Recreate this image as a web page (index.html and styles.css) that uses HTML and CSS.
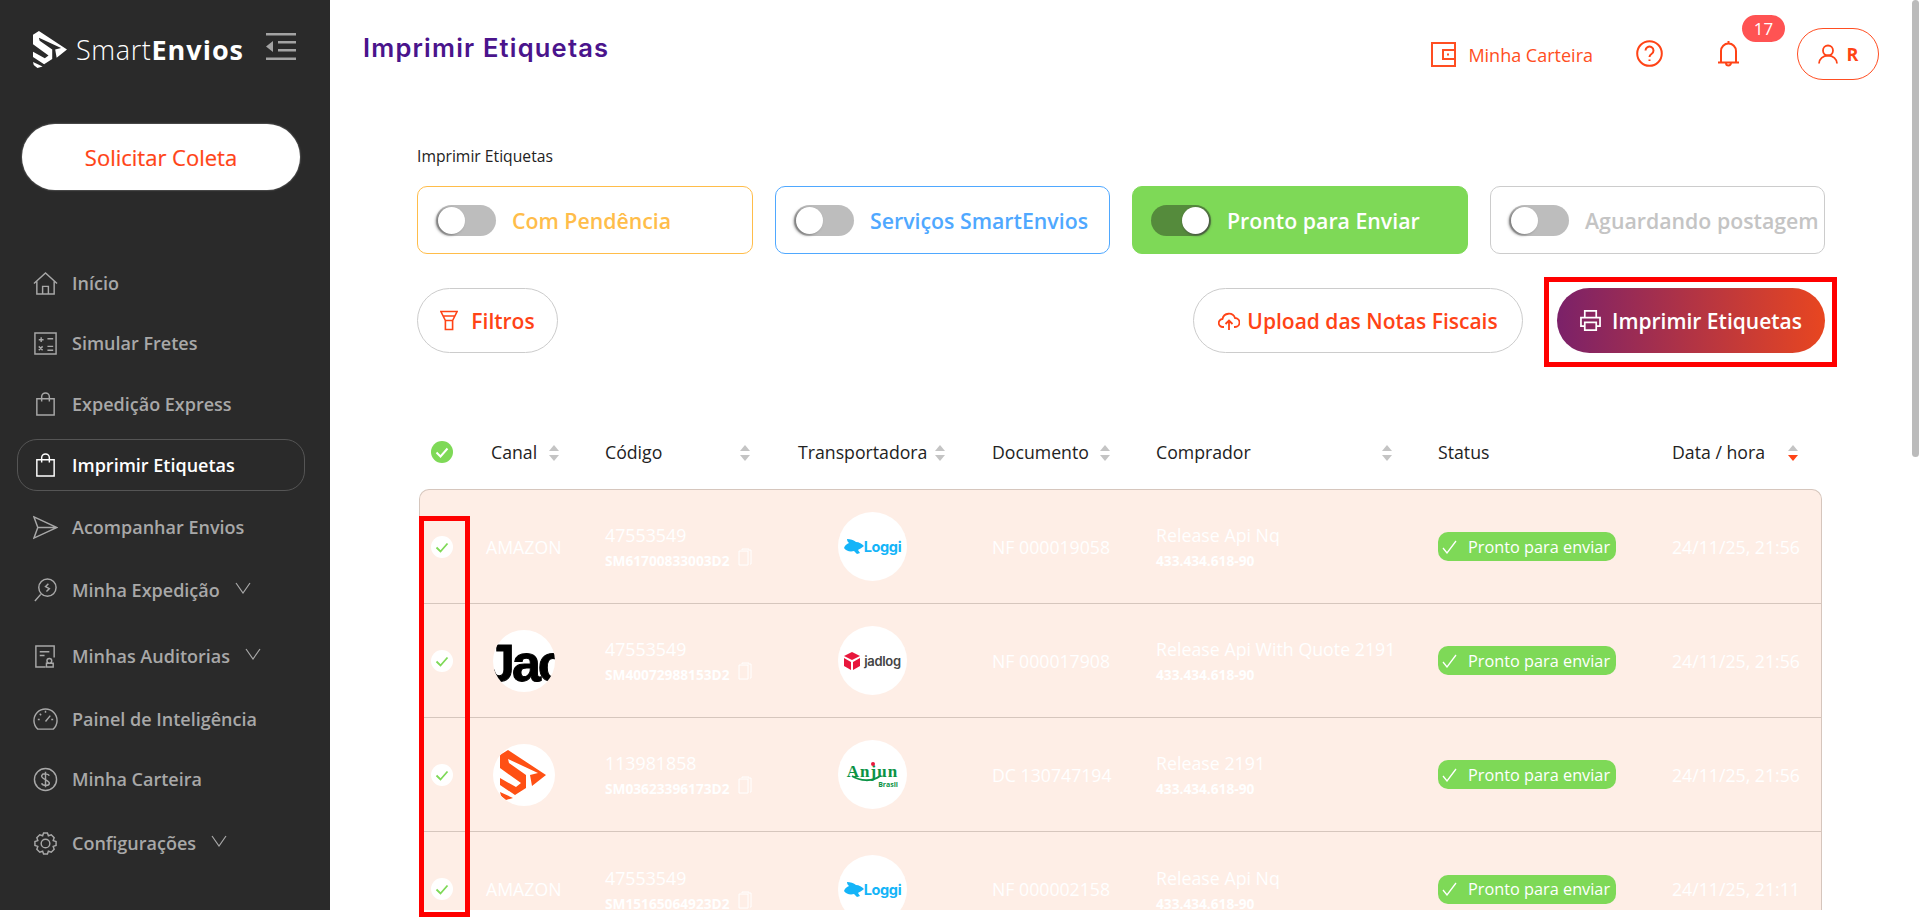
FILE: index.html
```html
<!DOCTYPE html>
<html lang="pt-BR">
<head>
<meta charset="utf-8">
<title>Imprimir Etiquetas</title>
<link rel="stylesheet" href="styles.css">
</head>
<body>
<div class="app">
  <aside class="sidebar">
    <div class="brand">
      <svg class="brand-mark" viewBox="7 6 46 50"><path fill="#fff" d="M15 6l38 25-14 11-2-11 8-2-30-14 1 4 17 12v13l-11 7-15-10v-7l16 9 5-4-21-15V11zM7 48l13 6-7 2-5-4z"/></svg>
      <span class="brand-name">Smart<b>Envios</b></span>
      <svg class="brand-toggle" viewBox="0 0 30 27"><path fill="#a3a3a3" d="M0 0h30v2.500H0zM12 8h18v2.500H12zM12 16h18v2.500H12zM0 24.500h30V27H0zM0 13.500L7 8v11z"/></svg>
    </div>
    <button class="collect">Solicitar Coleta</button>
    <nav class="nav">
      <a class="nav-item n1"><svg viewBox="0 0 26 26"><path d="M1 13L13 2l12 11M4 11v13h18V11M10 24v-8h6v8"/></svg>Início</a>
      <a class="nav-item n2"><svg viewBox="0 0 26 26"><path d="M2 2h22v22H2zM6 9h5M8.500 6.500v5M15 8h6M6 16l4 4M10 16l-4 4M15 16h6M15 20h6"/></svg>Simular Fretes</a>
      <a class="nav-item n3"><svg viewBox="0 0 26 26"><path d="M4 7h18v17H4zM9 10V5a4 4 0 0 1 8 0v5"/></svg>Expedição Express</a>
      <a class="nav-item active n4"><svg viewBox="0 0 26 26"><path d="M4 7h18v17H4zM9 10V5a4 4 0 0 1 8 0v5"/></svg>Imprimir Etiquetas</a>
      <a class="nav-item n5"><svg viewBox="0 0 26 26"><path d="M1 2l24 11L1 24l4-11zM5 13h20"/></svg>Acompanhar Envios</a>
      <a class="nav-item n6"><svg viewBox="0 0 26 26"><circle cx="15" cy="10" r="9"/><path d="M8 17l-6 7M16 6l-3 3 4 2-3 3"/></svg>Minha Expedição<svg class="chev" viewBox="0 0 16 12"><path d="M1 1l7 10 7-10"/></svg></a>
      <a class="nav-item n7"><svg viewBox="0 0 26 26"><path d="M22 14V2H3v22h10M7 8h10M7 12h5M17 15a2.500 2.500 0 1 1 0 5 2.500 2.500 0 0 1 0-5zM14 20h7v4h-7z"/></svg>Minhas Auditorias<svg class="chev" viewBox="0 0 16 12"><path d="M1 1l7 10 7-10"/></svg></a>
      <a class="nav-item n8"><svg viewBox="0 0 26 26"><path d="M5 23a12 12 0 1 1 16 0zM13 15l5-6M13 4v2M5 13h2M19 13h2M7 7l1.500 1.500"/></svg>Painel de Inteligência</a>
      <a class="nav-item n9"><svg viewBox="0 0 26 26"><circle cx="13" cy="13" r="11.500"/><path d="M17 9c-1-2-7-3-8 0s8 5 8 8-7 3-8 0M13 5v16"/></svg>Minha Carteira</a>
      <a class="nav-item n10"><svg viewBox="0 0 26 26"><circle cx="13" cy="13" r="4.500"/><path d="M11 2h4l1 3 3-1 3 3-1 3 3 1v4l-3 1 1 3-3 3-3-1-1 3h-4l-1-3-3 1-3-3 1-3-3-1v-4l3-1-1-3 3-3 3 1z"/></svg>Configurações<svg class="chev" viewBox="0 0 16 12"><path d="M1 1l7 10 7-10"/></svg></a>
    </nav>
  </aside>

  <main class="main">
    <header class="topbar">
      <h1 class="title">Imprimir Etiquetas</h1>
      <div class="top-actions">
        <a class="wallet"><svg viewBox="0 0 25 25"><path d="M1 1h23v23H1zM24 8H12v9h12M16 12.500h2"/></svg>Minha Carteira</a>
        <svg class="help" viewBox="0 0 27 27"><circle cx="13.500" cy="13.500" r="12.300"/><path d="M9.500 10.500a4 4 0 1 1 6 3.500c-1.500 1-2 1.500-2 3M13.500 19.500v1.500"/></svg>
        <div class="bell">
          <svg viewBox="0 0 21 27"><path d="M0 22.500h21M3 22.500V11a7.500 7.500 0 0 1 15 0v11.500M10.500 3.500V1M8 23a2.500 2.500 0 0 0 5 0"/></svg>
          <span class="badge">17</span>
        </div>
        <a class="user"><svg viewBox="0 0 20 20"><circle cx="10" cy="6" r="5"/><path d="M1 19a9 8 0 0 1 18 0"/></svg>R</a>
      </div>
    </header>

    <section class="filters">
      <p class="label">Imprimir Etiquetas</p>
      <div class="cards">
        <div class="card pending"><span class="switch"></span>Com Pendência</div>
        <div class="card services"><span class="switch"></span>Serviços SmartEnvios</div>
        <div class="card ready"><span class="switch on"></span>Pronto para Enviar</div>
        <div class="card waiting"><span class="switch"></span>Aguardando postagem</div>
      </div>
      <div class="actions">
        <button class="btn filter"><svg viewBox="0 0 20 22"><path d="M1 1h18l-5 10H6zM3.500 6h13M6 11h8v10H6z"/></svg>Filtros</button>
        <button class="btn upload"><svg viewBox="0 0 22 20"><path d="M6 16H5a4 4 0 0 1-.500-8A6.500 6.500 0 0 1 17 7a4.500 4.500 0 0 1 0 9h-1M11 19v-9M7.500 13L11 9.500l3.500 3.500"/></svg>Upload das Notas Fiscais</button>
        <button class="btn print"><svg viewBox="0 0 22 22"><path d="M5 8V1h12v7M5 17H1V8h20v9h-4M5 13h12v8H5z"/></svg>Imprimir Etiquetas</button>
      </div>
    </section>

    <section class="grid">
      <div class="row head">
        <div class="c-check"><span class="tick all"><svg viewBox="0 0 22 22"><path d="M5.500 11.500l4 4 7-8"/></svg></span></div>
        <div class="c-canal">Canal<i class="sort"></i></div>
        <div class="c-code">Código<i class="sort"></i></div>
        <div class="c-carrier">Transportadora<i class="sort"></i></div>
        <div class="c-doc">Documento<i class="sort"></i></div>
        <div class="c-buyer">Comprador<i class="sort"></i></div>
        <div class="c-status">Status</div>
        <div class="c-date">Data / hora<i class="sort desc"></i></div>
      </div>
      <div class="rows">
        <div class="row">
          <div class="c-check"><span class="tick"><svg viewBox="0 0 22 22"><path d="M5.500 11.500l4 4 7-8"/></svg></span></div>
          <div class="c-canal">AMAZON</div>
          <div class="c-code stacked"><div class="main-line">47553549</div><div class="sub-line">SM61700833003D2<svg class="copy" viewBox="0 0 14 18"><path d="M11 3V1H4v1M10 3H1v14h9zM12 2h1v14h-1"/></svg></div></div>
          <div class="c-carrier"><span class="logo-big"><svg class="rabbit" viewBox="0 0 20 17"><path d="M3 1c3 0 7 1 9 3 3 0 6 2 8 4-2 2-5 3-6 4l2 3-3 1-3-3c-4 1-8 0-10-3 1-3 3-4 5-5C4 4 3 3 3 1z"/></svg><b class="loggi">Loggi</b></span></div>
          <div class="c-doc">NF 000019058</div>
          <div class="c-buyer stacked"><div class="main-line">Release Api Nq</div><div class="sub-line">433.434.618-90</div></div>
          <div class="c-status"><span class="status"><svg viewBox="0 0 16 14"><path d="M1 8l4 5 9-12"/></svg>Pronto para enviar</span></div>
          <div class="c-date">24/11/25, 21:56</div>
        </div>
        <div class="row">
          <div class="c-check"><span class="tick"><svg viewBox="0 0 22 22"><path d="M5.500 11.500l4 4 7-8"/></svg></span></div>
          <div class="c-canal"><span class="logo-small ja"><b>Jac</b></span></div>
          <div class="c-code stacked"><div class="main-line">47553549</div><div class="sub-line">SM40072988153D2<svg class="copy" viewBox="0 0 14 18"><path d="M11 3V1H4v1M10 3H1v14h9zM12 2h1v14h-1"/></svg></div></div>
          <div class="c-carrier"><span class="logo-big"><svg class="cube" viewBox="0 0 16 18"><path d="M8 0l8 4-8 4-8-4zM0 6l7 4v8l-7-4zM16 6l-7 4v8l7-4z"/></svg><b class="jadlog">jadlog</b></span></div>
          <div class="c-doc">NF 000017908</div>
          <div class="c-buyer stacked"><div class="main-line">Release Api With Quote 2191</div><div class="sub-line">433.434.618-90</div></div>
          <div class="c-status"><span class="status"><svg viewBox="0 0 16 14"><path d="M1 8l4 5 9-12"/></svg>Pronto para enviar</span></div>
          <div class="c-date">24/11/25, 21:56</div>
        </div>
        <div class="row">
          <div class="c-check"><span class="tick"><svg viewBox="0 0 22 22"><path d="M5.500 11.500l4 4 7-8"/></svg></span></div>
          <div class="c-canal"><span class="logo-small"><svg class="smart" viewBox="0 0 62 62"><path d="M15 6l38 25-14 11-2-11 8-2-30-14 1 4 17 12v13l-11 7-15-10v-7l16 9 5-4-21-15V11zM7 48l13 6-7 2-5-4z"/></svg></span></div>
          <div class="c-code stacked"><div class="main-line">113981858</div><div class="sub-line">SM03623396173D2<svg class="copy" viewBox="0 0 14 18"><path d="M11 3V1H4v1M10 3H1v14h9zM12 2h1v14h-1"/></svg></div></div>
          <div class="c-carrier"><span class="logo-big anjun"><b>Anjun</b><small>Brasil</small><svg class="swoosh" viewBox="0 0 69 69"><path class="swoosh-arc" d="M14 36c8 5 20 6 28 0"/><circle class="swoosh-dot" cx="35" cy="24" r="2"/></svg></span></div>
          <div class="c-doc">DC 130747194</div>
          <div class="c-buyer stacked"><div class="main-line">Release 2191</div><div class="sub-line">433.434.618-90</div></div>
          <div class="c-status"><span class="status"><svg viewBox="0 0 16 14"><path d="M1 8l4 5 9-12"/></svg>Pronto para enviar</span></div>
          <div class="c-date">24/11/25, 21:56</div>
        </div>
        <div class="row">
          <div class="c-check"><span class="tick"><svg viewBox="0 0 22 22"><path d="M5.500 11.500l4 4 7-8"/></svg></span></div>
          <div class="c-canal">AMAZON</div>
          <div class="c-code stacked"><div class="main-line">47553549</div><div class="sub-line">SM15165064923D2<svg class="copy" viewBox="0 0 14 18"><path d="M11 3V1H4v1M10 3H1v14h9zM12 2h1v14h-1"/></svg></div></div>
          <div class="c-carrier"><span class="logo-big"><svg class="rabbit" viewBox="0 0 20 17"><path d="M3 1c3 0 7 1 9 3 3 0 6 2 8 4-2 2-5 3-6 4l2 3-3 1-3-3c-4 1-8 0-10-3 1-3 3-4 5-5C4 4 3 3 3 1z"/></svg><b class="loggi">Loggi</b></span></div>
          <div class="c-doc">NF 000002158</div>
          <div class="c-buyer stacked"><div class="main-line">Release Api Nq</div><div class="sub-line">433.434.618-90</div></div>
          <div class="c-status"><span class="status"><svg viewBox="0 0 16 14"><path d="M1 8l4 5 9-12"/></svg>Pronto para enviar</span></div>
          <div class="c-date">24/11/25, 21:11</div>
        </div>
      </div>
    </section>
  </main>
</div>
<div class="scroll-thumb"></div>
<div class="mark mark-print"></div>
<div class="mark mark-checks"></div>
</body>
</html>
```
FILE: styles.css
```css
* { box-sizing: border-box; }
html, body { margin: 0; height: 917px; overflow: hidden; background: #fff; }
body { position: relative; font-family: "Open Sans", sans-serif; color: #222; }
button { font-family: inherit; cursor: pointer; }
svg { fill: none; stroke: currentColor; }

.app { display: flex; height: 910px; overflow: hidden; }

/* Sidebar */
.sidebar { flex: 0 0 330px; background: #2a2a2a; padding: 30px 17px 0; }
.brand { display: flex; align-items: center; height: 39px; padding-left: 16px; }
.brand-mark { width: 34px; height: 39px; stroke: none; flex: none; }
.brand-name { margin-left: 9px; font-size: 27px; color: #fff; font-weight: 300; letter-spacing: .6px; line-height: 39px; white-space: nowrap; }
.brand-name b { font-weight: 700; letter-spacing: 1px; }
.brand-toggle { width: 30px; height: 27px; margin-left: auto; margin-right: 17px; margin-top: -6px; stroke: none; flex: none; }
.collect { display: block; width: 278px; height: 66px; margin: 55px 0 0 5px; border: 0; border-radius: 33px; background: #fff; color: #ff4316; font-size: 22px; font-weight: 400; -webkit-text-stroke: .2px #ff4316; box-shadow: 0 0 2px #999; }
.nav { margin-top: 78px; display: flex; flex-direction: column; }
.nav-item { display: flex; align-items: center; color: #a8a8a8; font-size: 18px; font-weight: 600; padding-left: 16px; white-space: nowrap; }
.nav-item > svg:first-child { width: 25px; height: 25px; margin-right: 14px; stroke-width: 1.500; flex: none; }
.chev { width: 16px; height: 12px; margin-left: 15px; margin-top: -4px; stroke-width: 1.200; }
.n1 { height: 30px; }
.n2 { height: 30px; margin-top: 30px; }
.n3 { height: 30px; margin-top: 31px; }
.n4 { height: 52px; margin-top: 20px; }
.n5 { height: 30px; margin-top: 21px; }
.n6 { height: 30px; margin-top: 33px; }
.n7 { height: 30px; margin-top: 36px; }
.n8 { height: 30px; margin-top: 33px; }
.n9 { height: 30px; margin-top: 30px; }
.n10 { height: 30px; margin-top: 34px; }
.nav-item.active { color: #fff; border: 1px solid #555; border-radius: 20px; width: 288px; padding-left: 15px; }

/* Main */
.main { flex: 1; min-width: 0; height: 910px; overflow: hidden; padding-left: 33px; }

.topbar { display: flex; justify-content: space-between; height: 130px; padding-top: 28px; }
.title { margin: 0; font-family: Inter, sans-serif; font-size: 25.500px; line-height: 40px; font-weight: 600; letter-spacing: 1.200px; color: #4a148c; white-space: nowrap; }
.top-actions { display: flex; align-items: flex-start; margin-right: 40px; padding-top: 2px; position: relative; }
.wallet { display: flex; align-items: center; color: #ff4e22; font-size: 18px; margin-top: 12px; height: 25px; white-space: nowrap; }
.wallet svg { width: 25px; height: 25px; margin-right: 12px; stroke-width: 2; }
.help { width: 27px; height: 27px; margin: 10px 0 0 43px; color: #ff4316; stroke-width: 2; }
.bell { width: 21px; height: 27px; margin: 10px 0 0 55px; position: relative; color: #ff4316; }
.bell svg { width: 21px; height: 27px; stroke-width: 2; display: block; }
.badge { position: absolute; left: 24px; top: -25px; width: 43px; height: 27px; border-radius: 14px; background: #ff5353; color: #fff; font-size: 17px; text-align: center; line-height: 27px; }
.user { display: flex; align-items: center; justify-content: center; width: 82px; height: 52px; margin: -2px 0 0 58px; border: 1px solid #ff4e22; border-radius: 26px; color: #ff4316; font-weight: 700; font-size: 18px; }
.user svg { width: 20px; height: 21px; margin-right: 9px; stroke-width: 1.800; }

/* Filters */
.filters { margin-left: 54px; width: 1408px; }
.label { margin: 14px 0 0; font-size: 15.700px; line-height: 24px; color: #222; }
.cards { display: grid; grid-template-columns: 336px 335px 336px 335px; column-gap: 22px; margin-top: 18px; }
.card { display: flex; align-items: center; height: 68px; padding-left: 18px; border: 1px solid; border-radius: 10px; font-size: 21.300px; font-weight: 600; white-space: nowrap; background: #fff; }
.switch { flex: none; position: relative; width: 60px; height: 31px; margin-right: 16px; border-radius: 16px; background: #bdbdbd; }
.switch::after { content: ""; position: absolute; left: 2px; top: 2px; width: 27px; height: 27px; border-radius: 50%; background: #fff; box-shadow: -2px 1px 3px #777; }
.switch.on { background: #558b3c; }
.switch.on::after { left: 31px; box-shadow: 1px 1px 3px #444; }
.pending { border-color: #ffbd4a; color: #ffbd4a; }
.services { border-color: #4fa8ff; color: #4fa8ff; }
.ready { background: #7ed957; border-color: #7ed957; color: #fff; }
.waiting { border-color: #ccc; color: #c4c4c4; }

.actions { display: flex; margin-top: 34px; }
.btn { display: flex; align-items: center; justify-content: center; height: 65px; border-radius: 33px; border: 1px solid #ccc; background: #fff; color: #ff4316; font-size: 21px; font-weight: 600; padding: 0; white-space: nowrap; }
.btn svg { flex: none; stroke-width: 1.800; }
.filter { width: 141px; }
.filter svg { width: 18px; height: 21px; margin-right: 13px; }
.upload { width: 330px; margin-left: auto; }
.upload svg { width: 22px; height: 20px; margin-right: 7px; }
.print { width: 268px; margin-left: 34px; border: 0; color: #fff; background: linear-gradient(90deg, #7b2169, #e84620); }
.print svg { width: 21px; height: 21px; margin-right: 11px; }

/* Grid */
.grid { margin-left: 56px; width: 1403px; }
.row { display: grid; grid-template-columns: 67px 119px 193px 194px 164px 282px 234px 1fr; align-items: center; height: 114px; border-bottom: 1px solid #d6c6bd; color: #fff; font-size: 17.700px; }
.head { height: 136px; padding-top: 62px; border-bottom: 0; color: #222; }
.head > div { white-space: nowrap; }
.head .c-canal { padding-left: 5px; }
.rows { background: #feeee6; border: 1px solid #d6c6bd; border-bottom: 0; border-radius: 10px 10px 0 0; }
.rows .row { margin-left: -1px; }
.rows .row:last-child { border-bottom: 0; }
.c-check { padding-left: 12px; }
.tick { display: block; width: 22px; height: 22px; border-radius: 50%; background: #fff; color: #7ed957; }
.tick svg { display: block; width: 22px; height: 22px; stroke-width: 1.800; }
.tick.all { background: #7ed957; color: #fff; }
.tick.all svg { stroke-width: 2; }
.sort { display: inline-block; position: relative; width: 11px; height: 16px; margin-left: 12px; vertical-align: -2px; }
.sort::before, .sort::after { content: ""; position: absolute; left: 0; border-left: 5.500px solid transparent; border-right: 5.500px solid transparent; }
.sort::before { top: 0; border-bottom: 6.500px solid #c4c4c4; }
.sort::after { bottom: 0; border-top: 6.500px solid #c4c4c4; }
.sort.desc::after { border-top-color: #ff4316; }
.c-code .sort { margin-left: 78px; }
.c-buyer .sort { margin-left: 131px; }
.c-date .sort { margin-left: 23px; }
.c-carrier .sort { margin-left: 8px; }
.c-doc .sort { margin-left: 11px; }
.stacked { padding-top: 2px; }
.main-line { font-size: 17.800px; line-height: 26px; white-space: nowrap; }
.sub-line { display: flex; align-items: center; font-size: 13.700px; line-height: 24px; font-weight: 700; white-space: nowrap; margin-top: 1px; }
.copy { width: 14px; height: 18px; margin-left: 8px; margin-top: -8px; stroke-width: 1; }
.logo-big { position: relative; display: flex; align-items: center; justify-content: center; width: 69px; height: 69px; margin-left: 40px; border-radius: 50%; background: #fff; overflow: hidden; }
.logo-small { display: block; width: 62px; height: 62px; border-radius: 50%; background: #fff; overflow: hidden; margin-left: 7px; }
.rabbit { width: 20px; height: 17px; fill: #14b4f8; stroke: none; flex: none; }
.loggi { font-family: Inter, sans-serif; color: #14b4f8; font-size: 14.500px; font-weight: 700; letter-spacing: -.4px; }
.cube { width: 16px; height: 18px; fill: #e8173c; stroke: none; flex: none; margin-right: 4px; }
.jadlog { font-family: Inter, sans-serif; color: #444; font-size: 13px; font-weight: 600; letter-spacing: -.3px; }
.ja b { display: block; margin-left: -7px; padding-top: 2px; color: #000; font-family: "Liberation Sans", sans-serif; font-size: 52px; line-height: 62px; font-weight: 700; letter-spacing: -3px; white-space: nowrap; -webkit-text-stroke: 1px #000; }
.smart { display: block; width: 62px; height: 62px; fill: #ff5014; stroke: none; }
.anjun { flex-direction: column; color: #0b9345; line-height: 1; }
.anjun b { font-family: "Liberation Serif", serif; font-size: 17px; letter-spacing: 1px; margin-top: 1px; }
.anjun small { font-size: 7px; font-weight: 700; align-self: flex-end; margin-right: 9px; margin-top: 1px; }
.swoosh { position: absolute; left: 0; top: 0; width: 69px; height: 69px; }
.swoosh-arc { stroke: #0b9345; stroke-width: 2; }
.swoosh-dot { fill: #e8173c; stroke: none; }
.status { display: flex; align-items: center; width: 178px; height: 29px; border-radius: 10px; background: #7ed957; color: #fff; font-size: 16.300px; white-space: nowrap; padding-left: 4px; }
.status svg { width: 16px; height: 14px; margin-right: 10px; stroke-width: 1.300; flex: none; }
.c-date { white-space: nowrap; }

/* Overlays: page scrollbar thumb and the reference's annotation boxes */
.scroll-thumb { position: absolute; left: 1912px; top: 0; width: 7px; height: 457px; background: #bbb; border-radius: 4px; }
.mark { position: absolute; border: 5px solid #f00; pointer-events: none; }
.mark-print { left: 1544px; top: 277px; width: 293px; height: 90px; }
.mark-checks { left: 419px; top: 516px; width: 51px; height: 401px; }
```
